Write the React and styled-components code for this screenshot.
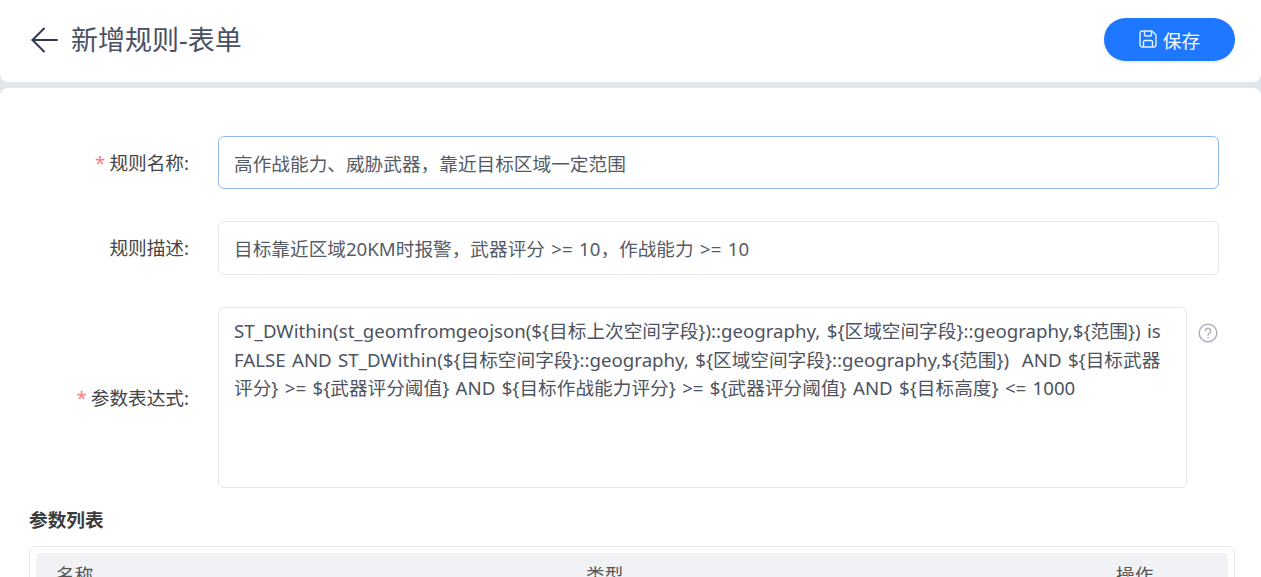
import React from 'react';
import styled, { createGlobalStyle } from 'styled-components';

const FONT = '"Noto Sans", "Noto Sans CJK SC", sans-serif';

const GlobalStyle = createGlobalStyle`
  html, body {
    margin: 0;
    height: 100%;
    overflow: hidden;
    background: #e1e6ea;
    font-family: ${FONT};
  }
  * {
    box-sizing: border-box;
  }
`;

const Page = styled.div`
  height: 577px;
  overflow: hidden;
  display: flex;
  flex-direction: column;
  gap: 6px;
`;

const Header = styled.header`
  flex: none;
  height: 82px;
  background: #fff;
  border-radius: 0 0 8px 8px;
  padding: 0 26px 3px 31px;
  display: flex;
  align-items: center;
  justify-content: space-between;
`;

const TitleGroup = styled.div`
  display: flex;
  align-items: center;
  gap: 13px;
`;

const BackIcon = styled.svg`
  width: 27px;
  height: 26px;
`;

const Title = styled.h1`
  margin: 0;
  font-size: 27px;
  font-weight: 400;
  line-height: 36px;
  color: #4a5064;
`;

const SaveButton = styled.button`
  width: 131px;
  height: 43px;
  margin-top: -1px;
  border: none;
  border-radius: 22px;
  background: #1e78ff;
  color: #fff;
  font-family: ${FONT};
  font-size: 18.67px;
  display: flex;
  align-items: center;
  justify-content: center;
  gap: 6px;
  box-shadow: 0 2px 3px rgba(0, 0, 0, 0.08);
`;

const SaveIcon = styled.svg`
  width: 18px;
  height: 18px;
`;

const Body = styled.main`
  flex: 1;
  background: #fff;
  border-radius: 8px 8px 0 0;
  padding: 48px 26px 0 29px;
`;

const Row = styled.div`
  display: grid;
  grid-template-columns: 189px 1fr ${(p) => (p.$help ? '48px' : '16px')};
  align-items: center;
  margin-bottom: ${(p) => p.$gap}px;
`;

const Label = styled.label`
  display: block;
  margin-right: 29px;
  text-align: right;
  white-space: nowrap;
  font-size: 18.67px;
  line-height: 26px;
  color: #444;
`;

const Required = styled.span`
  color: #ff7a80;
  margin-right: 4px;
`;

const Field = styled.div`
  height: ${(p) => p.$height}px;
  padding: 14px 15px;
  border: 1px solid ${(p) => (p.$focus ? '#94b8ee' : '#e4e6ea')};
  border-radius: 6px;
  background: #fff;
  font-size: 18.67px;
  line-height: 26px;
  word-spacing: 1.5px;
  color: #555b66;
`;

const Expression = styled(Field)`
  padding: 9px 15px;
  line-height: 28.6px;
  color: #4d5360;
`;

const HelpIcon = styled.svg`
  width: 20px;
  height: 20px;
  align-self: start;
  margin: 16px 0 0 11px;
`;

const SectionTitle = styled.h2`
  margin: 0 0 13px;
  font-size: 18.67px;
  font-weight: 700;
  line-height: 26px;
  color: #3c3c3c;
`;

const TableBox = styled.div`
  height: 120px;
  padding: 6px;
  border: 1px solid #e4e6ee;
  border-radius: 6px;
`;

const TableHead = styled.div`
  display: grid;
  grid-template-columns: 530px 1fr 112px;
  height: 60px;
  padding: 9px 0 0 20px;
  background: #f1f2f5;
  border-radius: 4px;
  font-size: 18.67px;
  line-height: 26px;
  color: #555;
`;

export default function App() {
  return (
    <>
      <GlobalStyle />
      <Page>
        <Header>
          <TitleGroup>
            <BackIcon viewBox="0 0 27 26" fill="none" stroke="#2f3a52" strokeWidth="2" strokeLinecap="round" strokeLinejoin="round">
              <path d="M26 13H1.5" />
              <path d="M13 1.5 1.5 13 13 24.5" />
            </BackIcon>
            <Title>新增规则-表单</Title>
          </TitleGroup>
          <SaveButton>
            <SaveIcon viewBox="0 0 18 18" fill="none" stroke="#e6f0ff" strokeWidth="1.4" strokeLinejoin="round">
              <path d="M3 1h10l4 4v9.5a2.5 2.5 0 0 1-2.5 2.5h-11A2.5 2.5 0 0 1 1 14.500v-11A2.500 2.500 0 0 1 3 1Z" />
              <path d="M5.500 1.200V5a1 1 0 0 0 1 1h5a1 1 0 0 0 1-1V1.200" />
              <path d="M4.500 16.800V12a1.500 1.500 0 0 1 1.500-1.500h6a1.500 1.500 0 0 1 1.500 1.500v4.800" />
            </SaveIcon>
            保存
          </SaveButton>
        </Header>
        <Body>
          <Row $gap={32}>
            <Label><Required>*</Required>规则名称:</Label>
            <Field $height={53} $focus>高作战能力、威胁武器，靠近目标区域一定范围</Field>
            <span />
          </Row>
          <Row $gap={32}>
            <Label>规则描述:</Label>
            <Field $height={54}>目标靠近区域20KM时报警，武器评分 &gt;= 10，作战能力 &gt;= 10</Field>
            <span />
          </Row>
          <Row $gap={19} $help>
            <Label><Required>*</Required>参数表达式:</Label>
            <Expression $height={181}>
              ST_DWithin(st_geomfromgeojson(${'{'}目标上次空间字段})::geography, ${'{'}区域空间字段}::geography,${'{'}范围}) is FALSE AND ST_DWithin(${'{'}目标空间字段}::geography, ${'{'}区域空间字段}::geography,${'{'}范围})&nbsp; AND ${'{'}目标武器评分} &gt;= ${'{'}武器评分阈值} AND ${'{'}目标作战能力评分} &gt;= ${'{'}武器评分阈值} AND ${'{'}目标高度} &lt;= 1000
            </Expression>
            <HelpIcon viewBox="0 0 20 20" fill="none" stroke="#a8adb7" strokeWidth="1.4" strokeLinecap="round">
              <circle cx="10" cy="10" r="8.800" />
              <path d="M7.400 7.900a2.600 2.600 0 1 1 4.100 2.100c-.9.600-1.500 1.100-1.500 2.200" />
              <path d="M10 14.600v.1" />
            </HelpIcon>
          </Row>
          <SectionTitle>参数列表</SectionTitle>
          <TableBox>
            <TableHead>
              <span>名称</span>
              <span>类型</span>
              <span>操作</span>
            </TableHead>
          </TableBox>
        </Body>
      </Page>
    </>
  );
}
